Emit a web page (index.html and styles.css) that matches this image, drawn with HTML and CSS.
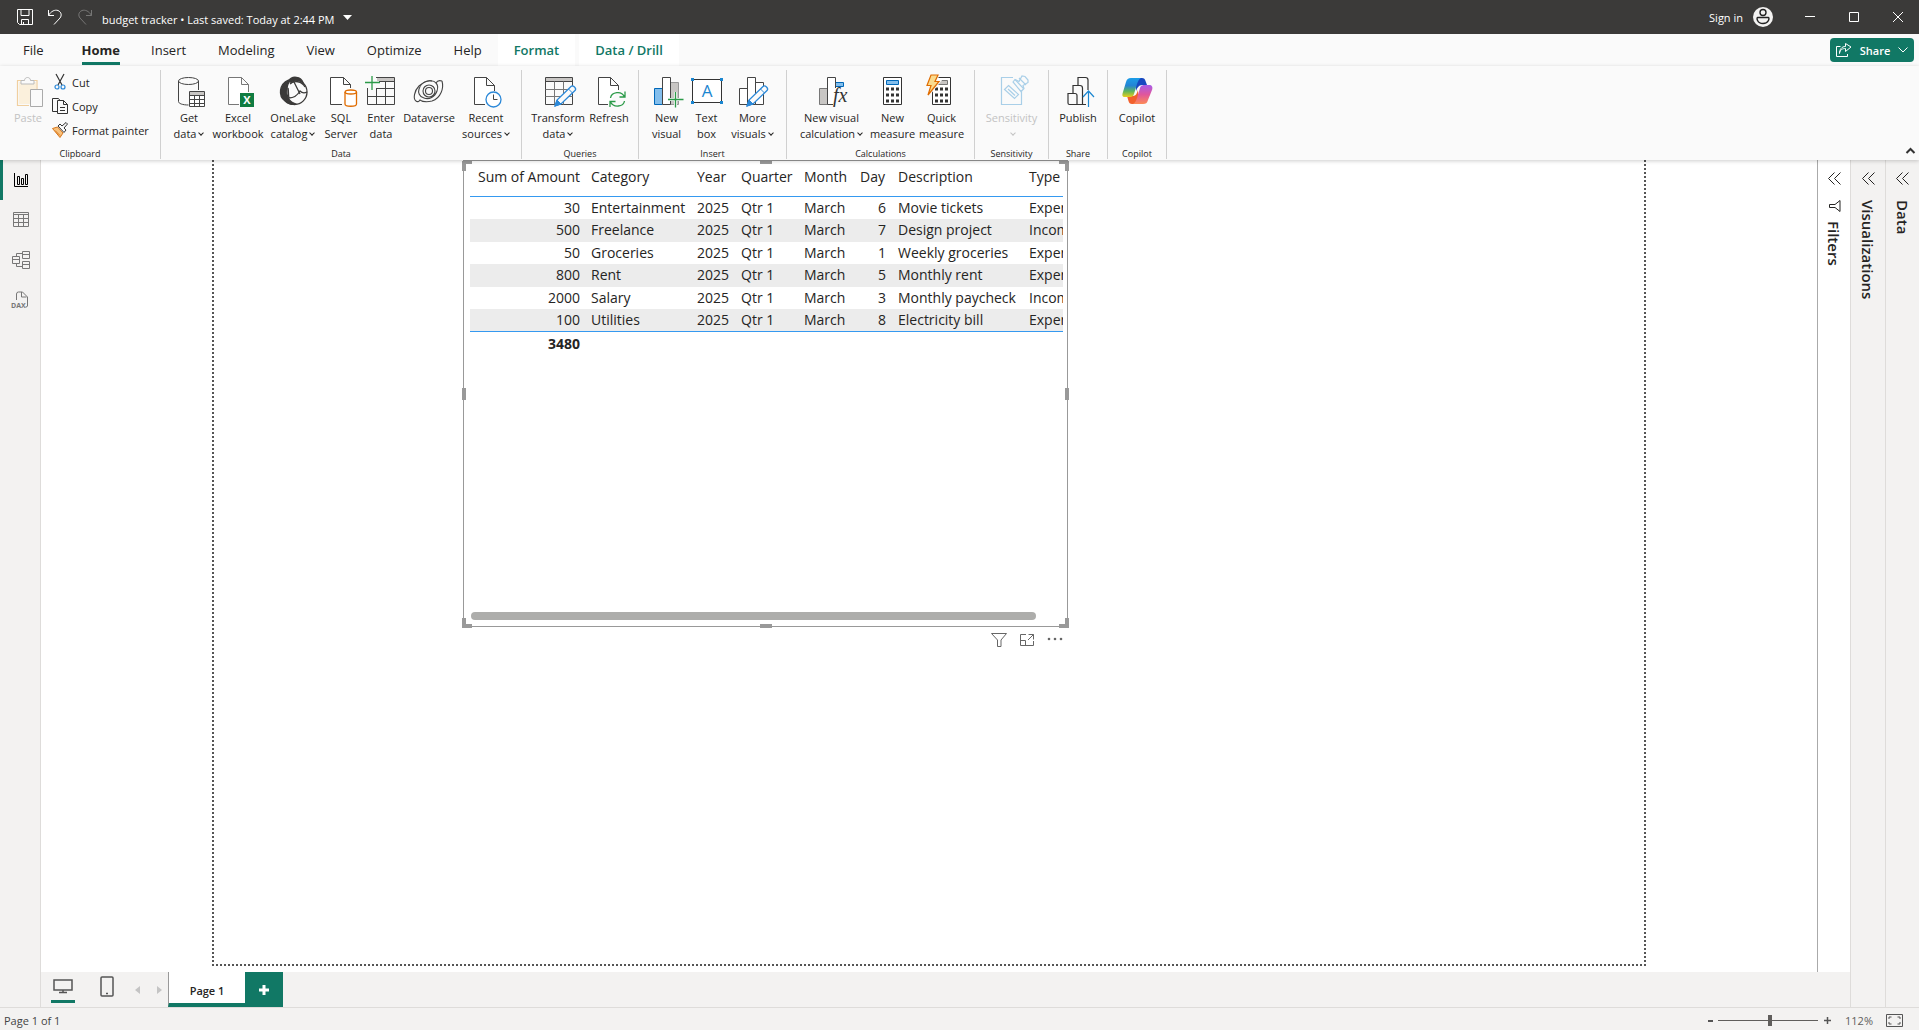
FILE: index.html
```html
<!DOCTYPE html>
<html lang="en">
<head>
<meta charset="utf-8">
<title>budget tracker</title>
<link rel="stylesheet" href="styles.css">
</head>
<body>
<div class="app">
  <header class="titlebar">
    <div class="quick">
      <button class="plain" aria-label="Save"><svg width="16" height="16" viewBox="0 0 16 16" class="line"><path d="M.5.5h15v15H2.5l-2-2zM4 .5v6h8v-6M4.500 15.500v-5h7v5M6.500 13v2"/></svg></button>
      <button class="plain" aria-label="Undo"><svg width="16" height="16" viewBox="0 0 16 16" class="line"><path d="M1.500 1v5.500h5.500M1.500 6.500C4 2 8 .5 11 1.500c3.500 1.500 4 5 2 7.500L7 15.500"/></svg></button>
      <button class="plain faded" aria-label="Redo" disabled><svg width="16" height="16" viewBox="0 0 16 16" class="line"><path d="M14.500 1v5.500H9M14.500 6.500C12 2 8 .5 5 1.500c-3.500 1.500-4 5-2 7.500l6 6.500"/></svg></button>
    </div>
    <button class="plain filename">budget tracker • Last saved: Today at 2:44 PM<svg width="10" height="6" viewBox="0 0 10 6"><path d="M0 0h9L4.500 5z" fill="#fff"/></svg></button>
    <div class="window-tools">
      <button class="plain signin">Sign in<svg width="20" height="20" viewBox="0 0 20 20"><circle cx="10" cy="10" r="10" fill="#f3f2f1"/><g fill="none" stroke="#222" stroke-width="1.400"><circle cx="10" cy="5.500" r="3"/><path d="M4.500 10.500h11c1 0 .7 6-5.500 6s-6.500-6-5.500-6z"/></g></svg></button>
      <button class="plain" aria-label="Minimize"><svg width="10" height="10" viewBox="0 0 10 10" class="line"><path d="M0 4.500h10"/></svg></button>
      <button class="plain" aria-label="Maximize"><svg width="10" height="10" viewBox="0 0 10 10" class="line"><path d="M.5.5h9v9h-9z"/></svg></button>
      <button class="plain" aria-label="Close"><svg width="10" height="10" viewBox="0 0 10 10" class="line"><path d="M0 0l10 10M10 0L0 10"/></svg></button>
    </div>
  </header>

  <nav class="tabs">
    <a href="#" class="tab file">File</a>
    <a href="#" class="tab active"><span>Home</span></a>
    <a href="#" class="tab">Insert</a>
    <a href="#" class="tab">Modeling</a>
    <a href="#" class="tab">View</a>
    <a href="#" class="tab">Optimize</a>
    <a href="#" class="tab">Help</a>
    <a href="#" class="tab context">Format</a>
    <a href="#" class="tab context">Data / Drill</a>
    <button class="share"><svg width="16" height="14" viewBox="0 0 16 14" class="line"><path d="M4.500 3.500h-4v10h11V11M3.500 10.500c.5-4 3-5 6-5v3l5.500-4.500L9.500.5v3c-4 0-6 3-6 7z"/></svg>Share<svg width="10" height="6" viewBox="0 0 10 6" class="line"><path d="M.5.5L5 5 9.500.5"/></svg></button>
  </nav>

  <section class="ribbon">
    <div class="group clipboard">
      <div class="tools">
        <button class="tool" disabled><svg width="32" height="32" viewBox="0 0 32 32"><path d="M5 4.500h20v9M17 29.500H5.500v-25" fill="none" stroke="#f0cf9f" stroke-width="1.200"/><path d="M7 6h17v7h-6v15H7z" fill="#fbf0dc"/><path d="M9 8V4.500h3.500c0-4 6-4 6 0H22V8z" fill="#fafafa" stroke="#bbb"/><path d="M18.500 13.500h12v17h-12z" fill="#fafafa" stroke="#aaa"/></svg>Paste</button>
        <div class="small-tools">
          <button class="small"><svg width="16" height="16" viewBox="0 0 16 16" fill="none" stroke="#333" stroke-width="1.200"><path d="M4 0l6 11M12 0L6 11"/><circle cx="5" cy="13" r="2" stroke="#2b88d8"/><circle cx="11" cy="13" r="2" stroke="#2b88d8"/></svg>Cut</button>
          <button class="small"><svg width="16" height="16" viewBox="0 0 16 16" fill="none" stroke="#333"><path d="M5 13.500H.5V.5h6l1.500 2"/><path d="M5.500 2.500h6l4 4v9h-10zM11.500 2.500v4h4M8 9.500h5M8 12.500h5"/></svg>Copy</button>
          <button class="small"><svg width="16" height="16" viewBox="0 0 16 16" fill="none" stroke="#333"><path d="M.5 6.500l5-1.500 5.500 6-3 4.500z" fill="#f8c17c" stroke="#d8771b"/><path d="M3 8.500l5 5" stroke="#d8771b"/><path d="M6 4l2-2 2 2 4-3.500L15.500 2 12 6l2 2-2 2.500z" fill="#fafafa"/></svg>Format painter</button>
        </div>
      </div>
      <div class="caption">Clipboard</div>
    </div>

    <div class="group data">
      <div class="tools">
        <button class="tool"><svg width="32" height="32" viewBox="0 0 32 32" fill="none" stroke="#444"><path d="M5.500 5v20.500c0 2 4 3.500 10 3.500M25.500 5v9"/><ellipse cx="15.500" cy="5" rx="10" ry="3.500"/><path d="M16.500 15.500h15v15h-15z" fill="#fff"/><path d="M17 16h14v3H17z" fill="#c8c6c4" stroke="none"/><path d="M16.500 19.500h15M16.500 23.500h15M16.500 27.500h15M21.500 19.500v11M26.500 19.500v11"/></svg>Get<br>data<i class="chev"></i></button>
        <button class="tool"><svg width="32" height="32" viewBox="0 0 32 32" fill="none" stroke="#777"><path d="M17 28.500H6.500v-27h13l7 7V16M19.500 1.500v7h7" fill="#fff"/><path d="M18 17h14v14H18z" fill="#107c41" stroke="none"/><text x="25" y="28" text-anchor="middle" font-size="11" font-weight="700" fill="#fff" stroke="none">X</text></svg>Excel<br>workbook</button>
        <button class="tool"><svg width="32" height="32" viewBox="0 0 32 32" fill="none" stroke="#3b3a39" stroke-width="1.300"><circle cx="17.500" cy="16" r="12.500"/><path d="M11.500 4C2 8 1 20 8 25c3 3 8 4 11 3-7-2-10-8-9-14 0-4 1-7 3-9zM12 4.500c3-5 12-4 14 2-4-3-8-2-12 0z" fill="#3b3a39"/><path d="M13 8c4-4 12-3 15 3M11 12c1 5 0 6 1 10 5 0 8-2 11-7 2 2 5 2 7 1M17 6l6 12"/></svg>OneLake<br>catalog<i class="chev"></i></button>
        <button class="tool"><svg width="32" height="32" viewBox="0 0 32 32" fill="none" stroke="#444"><path d="M17 28.500H5.500v-27h13l7 7V12M18.500 1.500v7h7" fill="#fff"/><path d="M20 16v12c0 3 11.500 3 11.500 0V16" fill="#fff" stroke="#e06c00" stroke-width="1.300"/><ellipse cx="25.800" cy="16" rx="5.700" ry="2" fill="#fff" stroke="#e06c00" stroke-width="1.300"/></svg>SQL<br>Server</button>
        <button class="tool"><svg width="32" height="32" viewBox="0 0 32 32" fill="none" stroke="#444"><path d="M12 2h17v3H12z" fill="#c8c6c4" stroke="none"/><path d="M11 1.500h18.500v27h-27V12M14 5.500h15.500M11 12.500h18.500M2.500 20.500h27M11.500 12v16.500M20.500 5.500v23"/><path d="M7 0v14M0 6.500h15" stroke="#2b9a48" stroke-width="1.300"/></svg>Enter<br>data</button>
        <button class="tool"><svg width="32" height="32" viewBox="0 0 32 32" fill="none" stroke="#444" stroke-width="1.100"><path d="M29 5c-3-1-5 0-6 2 2 2 2 5 1 8-2 6-8 9-13 7-5-1-6-6-5-9 2-6 7-9 13-8"/><path d="M29 5c2 7-1 17-10 20-8 2-12-1-12-1-1 2-3 2-4 1-3-2-2-10 3-15C14 3 21 4 23 7"/><circle cx="16" cy="15" r="6"/><circle cx="16" cy="15" r="3.500"/></svg>Dataverse</button>
        <button class="tool"><svg width="32" height="32" viewBox="0 0 32 32" fill="none" stroke="#444"><path d="M15 28.500H4.500v-27h12l8 8V15M16.500 1.500v8h8" fill="#fff"/><circle cx="23.500" cy="23.500" r="7.500" fill="#fff" stroke="#2b88d8" stroke-width="1.300"/><path d="M23.500 18.500v5h4"/></svg>Recent<br>sources<i class="chev"></i></button>
      </div>
      <div class="caption">Data</div>
    </div>

    <div class="group queries">
      <div class="tools">
        <button class="tool"><svg width="32" height="32" viewBox="0 0 32 32" fill="none" stroke="#444"><path d="M4 2h26v3H4z" fill="#c8c6c4" stroke="none"/><path d="M3.500 1.500h27v27h-27zM3.500 5.500h27" /><path d="M3.500 13.500h27M3.500 20.500h27M12.500 5.500v23M21.500 5.500v23" stroke="#777"/><path d="M13 30l2-6L29 10.500c2-2 6 2 4 4L19 28z" fill="#fafafa" stroke="#2b88d8" stroke-width="1.300"/><path d="M13 30l2-6 4 4z" fill="#2b88d8" stroke="#2b88d8"/><path d="M26.500 13l4 4" stroke="#2b88d8"/></svg>Transform<br>data<i class="chev"></i></button>
        <button class="tool"><svg width="32" height="32" viewBox="0 0 32 32" fill="none" stroke="#444"><path d="M15 28.500H5.500v-27h12l8 8V14M17.500 1.500v8h8" fill="#fff"/><path d="M17.500 22c1-6 11-8 14-1M32 15.500v5.500h-5.500M31.500 25c-1 6-11 7-14 1M17 31v-5.500h5.500" stroke="#2b9a48" stroke-width="1.300"/></svg>Refresh</button>
      </div>
      <div class="caption">Queries</div>
    </div>

    <div class="group insert">
      <div class="tools">
        <button class="tool"><svg width="32" height="32" viewBox="0 0 32 32" fill="none" stroke="#444"><path d="M3.500 12.500h8v16h-8z" fill="#83beec" stroke="#0067b8"/><path d="M19.500 6.500h8v22h-8z" fill="#c8c6c4" stroke="#999"/><path d="M11.500 1.500h8v27h-8z" fill="#fff"/><path d="M24.500 16v15.500M17 23.500h15.500" stroke="#fafafa" stroke-width="3"/><path d="M24.500 16v15.500M17 23.500h15.500" stroke="#2b9a48" stroke-width="1.300"/></svg>New<br>visual</button>
        <button class="tool"><svg width="32" height="32" viewBox="0 0 32 32"><path d="M1.500 3.500h29v23h-29z" fill="#fff" stroke="#333"/><path d="M0 2h3v3H0zM29 2h3v3h-3zM0 25h3v3H0zM29 25h3v3h-3z" fill="#1b86d0"/><text x="16" y="21" text-anchor="middle" font-size="17" fill="#1b86d0">A</text></svg>Text<br>box</button>
        <button class="tool"><svg width="32" height="32" viewBox="0 0 32 32" fill="none" stroke="#444"><path d="M2.500 12.500h8v16h-8zM10.500 1.500h8v27h-8zM18.500 6.500h8v22h-8z" fill="#fff"/><path d="M10 30l2-6L26 10.500c2-2 6 2 4 4L16 28z" fill="#fafafa" stroke="#2b88d8" stroke-width="1.300"/><path d="M10 30l2-6 4 4z" fill="#2b88d8" stroke="#2b88d8"/><path d="M23.500 13l4 4" stroke="#2b88d8"/></svg>More<br>visuals<i class="chev"></i></button>
      </div>
      <div class="caption">Insert</div>
    </div>

    <div class="group calculations">
      <div class="tools">
        <button class="tool"><svg width="32" height="32" viewBox="0 0 32 32" fill="none" stroke="#444"><path d="M3.500 12.500h8v16h-8z" fill="#c8c6c4" stroke="#777"/><path d="M19.500 6.500h8v4h-8z" fill="#83beec" stroke="#0067b8"/><path d="M17 28.500h-5.500v-27h8V12" fill="#fff"/><text x="17" y="26" font-family="Liberation Serif, serif" font-size="20" font-style="italic" fill="#333" stroke="none">fx</text></svg>New visual<br>calculation<i class="chev"></i></button>
        <button class="tool"><svg width="32" height="32" viewBox="0 0 32 32"><path d="M6.500 1.500h18v27h-18z" fill="#fff" stroke="#333"/><path d="M9.500 4.500h12v4h-12z" fill="#83beec" stroke="#0067b8"/><path d="M9 13h14M9 19h14M9 25h14" stroke="#333" stroke-width="3" stroke-dasharray="3 2"/></svg>New<br>measure</button>
        <button class="tool"><svg width="32" height="32" viewBox="0 0 32 32"><path d="M6.500 1.500h18v27h-18z" fill="#fff" stroke="#333"/><path d="M9.500 4.500h12v4h-12z" fill="#c8c6c4" stroke="#777"/><path d="M9 13h14M9 19h14M9 25h14" stroke="#333" stroke-width="3" stroke-dasharray="3 2"/><path d="M5-1h7L9 5.500h4L2 19l3-9.500H1z" fill="#fadb8e" stroke="#fafafa" stroke-width="3"/><path d="M5-1h7L9 5.500h4L2 19l3-9.500H1z" fill="#fadb8e" stroke="#e06c00" stroke-width="1.200"/></svg>Quick<br>measure</button>
      </div>
      <div class="caption">Calculations</div>
    </div>

    <div class="group sensitivity">
      <div class="tools">
        <button class="tool" disabled><svg width="32" height="32" viewBox="0 0 32 32" fill="none" stroke="#a9cfe8" stroke-width="1.200"><path d="M17 1.500H5.500v27h20V15"/><path d="M12.500 9.500l10 9-4 4-10-9zM12 13l7 6.500" fill="#fafafa"/><path d="M17 6l2-2.500 4 2L26 0l3 .5L32 4v2.500l-5 3 1 3-3 3z" fill="#fafafa"/><path d="M19 3.500l8.500 9M23 2l7 7"/></svg>Sensitivity<br><i class="chev"></i></button>
      </div>
      <div class="caption">Sensitivity</div>
    </div>

    <div class="group share-group">
      <div class="tools">
        <button class="tool"><svg width="32" height="32" viewBox="0 0 32 32" fill="none" stroke="#333" stroke-width="1.200"><path d="M6 17.500h7q2 0 2 2v9H7.500q-1.500 0-1.500-1.500zM11 17V9.500h7q2.500 0 2.500 2.500v16.500H15M16 9V1.500h7.500q2.500 0 2.500 2.500v10M20.500 28.500H24"/><path d="M26.500 31V15M21 21l5.500-6 5.500 6" stroke="#1b86d0"/></svg>Publish</button>
      </div>
      <div class="caption">Share</div>
    </div>

    <div class="group copilot">
      <div class="tools">
        <button class="tool"><svg width="32" height="32" viewBox="0 0 32 32"><defs><linearGradient id="cool" x1="0" y1="0" x2="0" y2="1"><stop offset="0" stop-color="#1b9de8"/><stop offset=".4" stop-color="#2384d4"/><stop offset=".7" stop-color="#5fb55c"/><stop offset="1" stop-color="#e9cf1c"/></linearGradient><linearGradient id="warm" x1="0" y1="0" x2="0" y2="1"><stop offset="0" stop-color="#a85be8"/><stop offset=".5" stop-color="#e0569c"/><stop offset="1" stop-color="#fd8a55"/></linearGradient></defs><path d="M14 2h7c2 0 3 1 3.500 3l1.500 4h-5c-3 0-5 3-6 6z" fill="#1848c0"/><path d="M18 28h-7c-2 0-3-1-3.500-3L6 20h6c3 0 4-3 5-6z" fill="#f2602c"/><path d="M10 2h10c-2 1-3 3-4 6l-3 10c-1 3-3 3-5 3H4c-3 0-3-2-2-5L5 6c1-3 2-4 5-4z" fill="url(#cool)"/><path d="M22 28H12c2-1 3-3 4-6l3-10c1-3 3-3 5-3h4c3 0 4 2 3 5l-4 10c-1 3-2 4-5 4z" fill="url(#warm)"/></svg>Copilot</button>
      </div>
      <div class="caption">Copilot</div>
    </div>
    <button class="plain collapse" aria-label="Collapse ribbon"><svg width="9" height="6" viewBox="0 0 9 6" fill="none" stroke="#333" stroke-width="2"><path d="M.5 5l4-4 4 4"/></svg></button>
  </section>

  <div class="workspace">
    <nav class="rail">
      <a href="#" class="current" aria-label="Report view"><svg width="18" height="18" viewBox="0 0 18 18" fill="none" stroke="#000"><path d="M2.500 2v13.500H16M5.500 5.500h2v8h-2zM9.500 7.500h2v6h-2zM13.500 3.500h2v10h-2z"/></svg></a>
      <a href="#" aria-label="Table view"><svg width="18" height="18" viewBox="0 0 18 18" fill="none" stroke="#777"><path d="M1.500 1.500h15v14h-15zM1.500 3.500h15M1.500 7.500h15M1.500 11.500h15M6.500 3.500v12M11.500 3.500v12"/></svg></a>
      <a href="#" aria-label="Model view"><svg width="18" height="18" viewBox="0 0 18 18" fill="none" stroke="#777"><path d="M.5 5.500h7v7h-7zM.5 8.500h7M10.500.5h7v7h-7zM10.500 3.500h7M10.500 10.500h7v7h-7zM10.500 13.500h7M4.500 5.500v-3h6M4.500 12.500v3h6"/></svg></a>
      <a href="#" aria-label="DAX query view"><svg width="18" height="18" viewBox="0 0 18 18" fill="none" stroke="#777"><path d="M4.500 9V3q0-2 2-2h4l5 5v9q0 1-2 1M9.500 1v5h5"/><text x="-1" y="17" font-size="7" font-weight="700" fill="#777" stroke="none">DAX</text></svg></a>
    </nav>

    <main class="center">
      <div class="stage">
        <div class="canvas">
          <div class="page">
            <section class="visual" aria-label="Table visual">
              <div class="table-view">
                <table>
                  <colgroup><col class="c-amount"><col class="c-category"><col class="c-year"><col class="c-quarter"><col class="c-month"><col class="c-day"><col class="c-desc"><col class="c-type"></colgroup>
                  <thead><tr><th class="num">Sum of Amount</th><th>Category</th><th>Year</th><th>Quarter</th><th>Month</th><th>Day</th><th>Description</th><th>Type</th></tr></thead>
                  <tbody>
                    <tr><td class="num">30</td><td>Entertainment</td><td class="num">2025</td><td>Qtr 1</td><td>March</td><td class="num">6</td><td>Movie tickets</td><td>Expense</td></tr>
                    <tr><td class="num">500</td><td>Freelance</td><td class="num">2025</td><td>Qtr 1</td><td>March</td><td class="num">7</td><td>Design project</td><td>Income</td></tr>
                    <tr><td class="num">50</td><td>Groceries</td><td class="num">2025</td><td>Qtr 1</td><td>March</td><td class="num">1</td><td>Weekly groceries</td><td>Expense</td></tr>
                    <tr><td class="num">800</td><td>Rent</td><td class="num">2025</td><td>Qtr 1</td><td>March</td><td class="num">5</td><td>Monthly rent</td><td>Expense</td></tr>
                    <tr><td class="num">2000</td><td>Salary</td><td class="num">2025</td><td>Qtr 1</td><td>March</td><td class="num">3</td><td>Monthly paycheck</td><td>Income</td></tr>
                    <tr><td class="num">100</td><td>Utilities</td><td class="num">2025</td><td>Qtr 1</td><td>March</td><td class="num">8</td><td>Electricity bill</td><td>Expense</td></tr>
                  </tbody>
                  <tfoot><tr><td class="num">3480</td><td colspan="7"></td></tr></tfoot>
                </table>
              </div>
              <div class="scrollbar"></div>
              <i class="grip nw"></i><i class="grip ne"></i><i class="grip sw"></i><i class="grip se"></i>
              <i class="grip n"></i><i class="grip s"></i><i class="grip w"></i><i class="grip e"></i>
              <div class="visual-actions">
                <button class="plain" aria-label="Filters on visual"><svg width="16" height="16" viewBox="0 0 16 16" fill="none" stroke="#666"><path d="M.5 1.500h15L10 8v6.500H6.500V8z"/></svg></button>
                <button class="plain" aria-label="Focus mode"><svg width="16" height="16" viewBox="0 0 16 16" fill="none" stroke="#666"><path d="M7 2.500H1.500v11h13V9M9.500 2.500h5v5M14.500 2.500L9 8M1.500 8.500h5v5"/></svg></button>
                <button class="plain" aria-label="More options"><svg width="16" height="16" viewBox="0 0 16 16" fill="#666"><circle cx="2" cy="7" r="1.300"/><circle cx="8" cy="7" r="1.300"/><circle cx="14" cy="7" r="1.300"/></svg></button>
              </div>
            </section>
          </div>
        </div>
        <aside class="filters">
          <button class="pane-button"><svg width="13" height="13" viewBox="0 0 13 13" class="dark"><path d="M6.500.5l-6 6 6 6M12.500.5l-6 6 6 6"/></svg><span><svg width="13" height="12" viewBox="0 0 13 12" class="dark"><path d="M12 .5v11L7 7.500H1.500v-3H7z"/></svg>Filters</span></button>
        </aside>
      </div>
      <footer class="pages">
        <button class="plain layout on" aria-label="Desktop layout"><svg width="20" height="15" viewBox="0 0 20 15" fill="none" stroke="#555"><path d="M1 1h18v10H1z" stroke-width="1.500"/><path d="M10 11v3M6 13.500h8" stroke-width="1.500"/></svg></button>
        <button class="plain layout" aria-label="Mobile layout"><svg width="14" height="21" viewBox="0 0 14 21" fill="none" stroke="#555" stroke-width="1.500"><rect x="1" y="1" width="12" height="19" rx="1"/><path d="M6 17.500h2"/></svg></button>
        <button class="plain step" aria-label="Previous page"><svg width="5" height="8" viewBox="0 0 5 8"><path d="M5 0v8L0 4z" fill="#c4c4c4"/></svg></button>
        <button class="plain step" aria-label="Next page"><svg width="5" height="8" viewBox="0 0 5 8"><path d="M0 0v8l5-4z" fill="#c4c4c4"/></svg></button>
        <button class="page-tab">Page 1</button>
        <button class="add-page" aria-label="New page"><svg width="12" height="12" viewBox="0 0 12 12"><path d="M6 1v10M1 6h10" stroke="#fff" stroke-width="3"/></svg></button>
      </footer>
    </main>

    <aside class="pane"><button class="pane-button"><svg width="13" height="13" viewBox="0 0 13 13" class="dark"><path d="M6.500.5l-6 6 6 6M12.500.5l-6 6 6 6"/></svg><span>Visualizations</span></button></aside>
    <aside class="pane last"><button class="pane-button"><svg width="13" height="13" viewBox="0 0 13 13" class="dark"><path d="M6.500.5l-6 6 6 6M12.500.5l-6 6 6 6"/></svg><span>Data</span></button></aside>
  </div>

  <footer class="status">
    <span>Page 1 of 1</span>
    <div class="zoom">
      <button class="plain" aria-label="Zoom out"><svg width="5" height="9" viewBox="0 0 5 9"><path d="M0 5h5" stroke="#555" stroke-width="2"/></svg></button>
      <input type="range" min="0" max="100" value="52" aria-label="Zoom level">
      <button class="plain" aria-label="Zoom in"><svg width="9" height="9" viewBox="0 0 9 9"><path d="M4.500 1v7M1 4.500h7" stroke="#555" stroke-width="1.500"/></svg></button>
      <span class="percent">112%</span>
      <button class="plain" aria-label="Fit to page"><svg width="17" height="13" viewBox="0 0 17 13" fill="none" stroke="#555"><path d="M.5.500h16v12H.5zM3 5V3h2.500M11.500 3H14v2M3 8v2h2.500M11.500 10H14V8"/></svg></button>
    </div>
  </footer>
</div>
</body>
</html>
```

FILE: styles.css
```css
* { box-sizing: border-box; }
body { margin: 0; font-family: "Open Sans", "Noto Sans", sans-serif; font-size: 11px; color: #252423; }
button { font: inherit; color: inherit; background: none; border: 0; margin: 0; padding: 0; }
a { color: inherit; text-decoration: none; }
svg { display: block; flex: none; overflow: visible; }
.line { fill: none; stroke: #fff; }
.dark { fill: none; stroke: #252423; }
.plain { display: flex; align-items: center; }
.app { height: 100vh; display: flex; flex-direction: column; overflow: hidden; background: #fff; }

/* Title bar */
.titlebar { flex: none; height: 34px; display: flex; align-items: center; background: #3b3a39; color: #fff; padding: 0 16px 0 17px; }
.quick { display: flex; gap: 14px; }
.faded { opacity: .3; }
.filename { margin-left: 9px; padding-top: 5px; gap: 8px; }
.filename svg { margin-bottom: 3px; }
.window-tools { margin-left: auto; display: flex; align-items: center; gap: 34px; }
.signin { gap: 10px; margin-right: -2px; }

/* Tabs */
.tabs { flex: none; height: 32px; display: flex; background: #fafafa; padding: 0 5px 0 7px; font-size: 13px; }
.tab { padding: 0 16px; line-height: 32px; }
.tab.file { padding-right: 22px; }
.tab.active { font-weight: 700; padding-right: 15px; }
.tab.active span { display: block; height: 31px; border-bottom: 3px solid #117865; }
.tab.context { background: #fff; color: #117865; font-weight: 600; margin-right: 4px; }
.share { margin: 4px 0 0 auto; height: 24px; width: 84px; display: flex; align-items: center; justify-content: center; gap: 8px; background: #117865; color: #fff; border-radius: 4px; font-size: 11px; font-weight: 600; }

/* Ribbon */
.ribbon { flex: none; height: 94px; padding: 4px 4px 1px 0; display: flex; background: #fafafa; position: relative; z-index: 2; box-shadow: 0 1px 4px rgba(0, 0, 0, .2); }
.group { display: flex; flex-direction: column; justify-content: space-between; padding-top: 6px; border-right: 1px solid #d0d0d0; }
.tools { display: grid; justify-content: center; align-items: start; }
.tool { line-height: 16px; white-space: nowrap; text-align: center; }
.tool svg { margin: 0 auto 2px; }
.tool:disabled { color: #c3c3c3; }
.chev { display: inline-block; width: 4px; height: 4px; margin: 0 1px 3px 3px; border: solid currentColor; border-width: 0 1px 1px 0; rotate: 45deg; }
.caption { font-size: 9px; line-height: 10px; text-align: center; }
.clipboard { width: 161px; }
.clipboard .tools { display: flex; justify-content: flex-start; padding-left: 12px; }
.small-tools { display: flex; flex-direction: column; margin-left: 8px; gap: 8px; margin-top: -2px; }
.small { display: flex; align-items: center; gap: 4px; height: 16px; white-space: nowrap; }
.data { width: 361px; }
.data .tools { grid-template-columns: 44px 54px 56px 40px 40px 56px 58px; }
.queries { width: 117px; }
.queries .tools { grid-template-columns: 58px 44px; }
.insert { width: 148px; }
.insert .tools { grid-template-columns: 40px 40px 52px; }
.calculations { width: 188px; }
.calculations .tools { grid-template-columns: 74px 48px 50px; }
.sensitivity { width: 74px; }
.share-group, .copilot { width: 59px; }
.collapse { margin: auto 0 5px auto; }

/* Workspace */
.workspace { flex: 1; min-height: 0; display: flex; }
.rail { width: 41px; flex: none; background: #f3f2f1; border-right: 1px solid #dedcda; display: flex; flex-direction: column; }
.rail a { height: 40px; display: flex; align-items: center; padding-left: 12px; border-left: 0 solid #117865; }
.rail .current { border-left-width: 3px; padding-left: 9px; }
.center { flex: 1; min-width: 0; display: flex; flex-direction: column; }
.stage { flex: 1; min-height: 0; display: flex; }
.canvas { flex: 1; display: flex; padding: 0 171px 6px; }
.page { flex: 1; position: relative; border: 2px dotted #555; border-top: 0; }
.visual { position: absolute; left: 249px; top: 0; width: 605px; height: 467px; border: 1px solid #999; padding: 0 4px 6px 6px; display: flex; flex-direction: column; }
.table-view { flex: 1; overflow: hidden; }
table { width: 623px; table-layout: fixed; border-collapse: collapse; font-size: 14px; line-height: 18px; }
.c-amount { width: 115px; }
.c-category { width: 106px; }
.c-year { width: 44px; }
.c-quarter { width: 63px; }
.c-month { width: 56px; }
.c-day { width: 38px; }
.c-desc { width: 131px; }
.c-type { width: 70px; }
th { font-weight: 400; text-align: left; height: 35px; padding: 7px 6px 9px; border-bottom: 1px solid #3599f0; white-space: nowrap; }
td { height: 22px; padding: 2px 6px; white-space: nowrap; }
.num { text-align: right; }
th.num, td.num:first-child { padding-right: 5px; }
tbody tr:nth-child(even) { background: #ececec; }
tbody tr:nth-child(even) td { height: 23px; }
tfoot td { font-weight: 700; height: 24px; border-top: 1px solid #3599f0; }
.scrollbar { height: 8px; width: 565px; margin-left: 1px; border-radius: 4px; background: #adadab; }
.grip { position: absolute; border: 0 solid #999; width: 10px; height: 10px; }
.nw { left: -2px; top: 0; border-width: 3px 0 0 4px; }
.ne { right: -2px; top: 0; border-width: 3px 4px 0 0; }
.sw { left: -2px; bottom: -2px; border-width: 0 0 4px 4px; }
.se { right: -2px; bottom: -2px; border-width: 0 4px 4px 0; }
.n, .s { left: calc(50% - 6px); width: 12px; height: 4px; background: #999; }
.n { top: -1px; }
.s { bottom: -2px; }
.w, .e { top: calc(50% - 6px); width: 4px; height: 12px; background: #999; }
.w { left: -2px; }
.e { right: -2px; }
.visual-actions { position: absolute; right: 4px; top: 471px; display: flex; gap: 12px; }

/* Side panes */
.filters { width: 33px; flex: none; border-left: 1px solid #aaa; }
.pane { width: 35px; flex: none; background: #f3f2f1; border-left: 1px solid #dedcda; }
.pane.last { width: 34px; }
.pane-button { width: 100%; display: flex; flex-direction: column; align-items: center; gap: 15px; padding-top: 12px; font-size: 15px; font-weight: 600; }
.pane-button span { display: flex; align-items: center; gap: 9px; writing-mode: vertical-rl; line-height: 18px; }

/* Page tabs */
.pages { flex: none; height: 35px; display: flex; background: #f3f2f1; }
.layout { width: 24px; margin: 0 0 4px 10px; justify-content: center; border-bottom: 3px solid transparent; }
.layout + .layout { margin-left: 20px; }
.layout.on { border-color: #117865; }
.step { width: 5px; margin-left: 16px; }
.step + .step { margin: 0 6px 0 17px; }
.page-tab { width: 77px; background: #fff; border-left: 1px solid #999; border-bottom: 4px solid #117865; padding-top: 6px; font-weight: 600; }
.add-page { width: 38px; background: #117865; display: flex; align-items: center; justify-content: center; }

/* Status bar */
.status { flex: none; height: 23px; display: flex; align-items: center; justify-content: space-between; background: #f3f2f1; border-top: 1px solid #dedcda; padding: 2px 16px 0 4px; color: #444; font-size: 11px; }
.zoom { display: flex; align-items: center; gap: 5px; color: #605e5c; }
.percent { margin: 0 8px; }
input[type="range"] { appearance: none; width: 100px; height: 12px; margin: 0; background: linear-gradient(#605e5c, #605e5c) center / 100% 1px no-repeat; }
input[type="range"]::-webkit-slider-thumb { appearance: none; width: 4px; height: 11px; background: #605e5c; }
```
